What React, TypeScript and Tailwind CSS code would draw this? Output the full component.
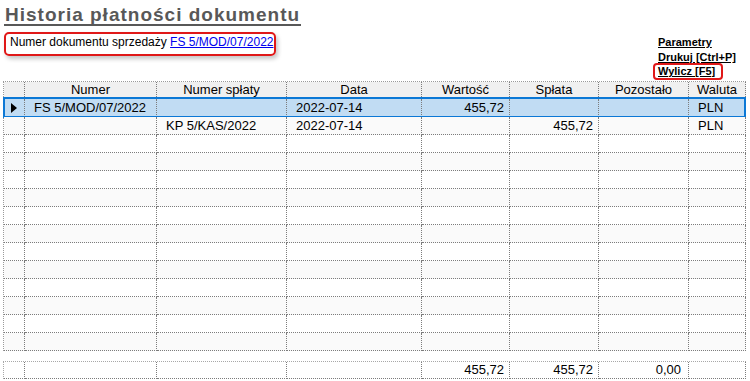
import React from "react";

const COLS = "grid-cols-[21px_132px_130px_135px_88px_89px_90px_57px]";

type Align = "l" | "r" | "c" | "r7";

const headers: { t: string; a: Align }[] = [
  { t: "", a: "c" },
  { t: "Numer", a: "c" },
  { t: "Numer spłaty", a: "c" },
  { t: "Data", a: "c" },
  { t: "Wartość", a: "c" },
  { t: "Spłata", a: "c" },
  { t: "Pozostało", a: "c" },
  { t: "Waluta", a: "c" },
];

const aligns: Align[] = ["c", "l", "l", "l", "r", "r", "r7", "l"];

const rows: string[][] = [
  ["", "FS 5/MOD/07/2022", "", "2022-07-14", "455,72", "", "", "PLN"],
  ["", "", "KP 5/KAS/2022", "2022-07-14", "", "455,72", "", "PLN"],
  ...Array.from({ length: 12 }, () => ["", "", "", "", "", "", "", ""]),
];

function alignCls(a: Align) {
  if (a === "r") return "justify-end pr-[5px]";
  if (a === "r7") return "justify-end pr-[7px]";
  if (a === "l") return "justify-start pl-[9px]";
  return "justify-center";
}

function Arrow() {
  return (
    <svg width="6" height="10" viewBox="0 0 6 10" className="block">
      <path d="M0 0 L6 5 L0 10 Z" fill="#000" />
    </svg>
  );
}

export default function App() {
  return (
    <div
      className="w-[750px] h-[381px] bg-white overflow-hidden text-black"
      style={{ fontFamily: '"Liberation Sans", Arial, sans-serif' }}
    >
      {/* Top section */}
      <div className="flex h-[81px]">
        <div className="flex flex-col items-start">
          <div className="ml-[4px] pl-[1px] pr-[1px] pt-[6px] h-[26px] leading-[18px] text-[19px] font-bold tracking-[1px] text-[#585858] border-b-2 border-[#585858] whitespace-nowrap">
            Historia płatności dokumentu
          </div>
          <div className="mt-[6px] ml-[4px] w-[272px] h-[24px] border-2 border-[#e01818] rounded-[5px] pl-[4px] pt-[1px] text-[12px] leading-[14px] whitespace-nowrap shadow-[2px_3px_4px_rgba(0,0,0,0.22)]">
            Numer dokumentu sprzedaży{" "}
            <span className="text-[#0000ee] underline">FS 5/MOD/07/2022</span>
          </div>
        </div>
        <div className="ml-auto mr-[7px] w-[90px] pt-[35px] flex flex-col items-start text-[11px] font-bold whitespace-nowrap">
          <span className="ml-[5px] leading-[15px] underline">Parametry</span>
          <span className="ml-[5px] leading-[15px] underline">Drukuj [Ctrl+P]</span>
          <div className="-mt-[2px] border-2 border-[#e01818] rounded-[4px] pl-[3px] pr-[6px] h-[17px] leading-[13px]">
            <span className="underline">Wylicz [F5]</span>
          </div>
        </div>
      </div>

      {/* Main grid */}
      <div className={`ml-[3px] w-[743px] grid ${COLS} border-l border-t border-dotted border-[#9a9a9a] text-[13px]`}>
        {headers.map((h, i) => (
          <div
            key={`h${i}`}
            className={`h-[17px] flex items-center leading-[16px] bg-[#f0f0f0] border-r border-b border-dotted border-[#7c7c7c] whitespace-nowrap ${alignCls(h.a)}`}
          >
            {h.t}
          </div>
        ))}
      </div>
      <div className="ml-[3px] w-[743px] border-l border-dotted border-[#9a9a9a] text-[13px]">
        {rows.map((r, ri) => {
          const sel = ri === 0;
          const bg = sel ? "bg-[#c1dcf3]" : ri % 2 === 1 ? "bg-[#fafafa]" : "bg-white";
          return (
            <div key={ri} className={`relative grid ${COLS}`}>
              {r.map((c, ci) => (
                <div
                  key={ci}
                  className={`h-[18px] flex items-center leading-[17px] border-r border-b border-dotted border-[#7c7c7c] whitespace-nowrap ${bg} ${
                    sel && ci === 0 ? "justify-start pl-[7px]" : alignCls(aligns[ci])
                  }`}
                >
                  {sel && ci === 0 ? <Arrow /> : c}
                </div>
              ))}
              {sel && (
                <div className="absolute top-[-2px] left-[-1px] right-0 bottom-[-1px] border-2 border-[#0b78d6] pointer-events-none" />
              )}
            </div>
          );
        })}
      </div>

      {/* Summary row */}
      <div className={`mt-[10px] ml-[3px] w-[743px] grid ${COLS} border-l border-t border-dotted border-[#a8a8a8] text-[13px]`}>
        {["", "", "", "", "455,72", "455,72", "0,00", ""].map((c, ci) => (
          <div
            key={ci}
            className={`h-[17px] flex items-center leading-[16px] border-r border-b border-dotted border-[#7c7c7c] whitespace-nowrap ${alignCls(aligns[ci])}`}
          >
            {c}
          </div>
        ))}
      </div>
    </div>
  );
}
